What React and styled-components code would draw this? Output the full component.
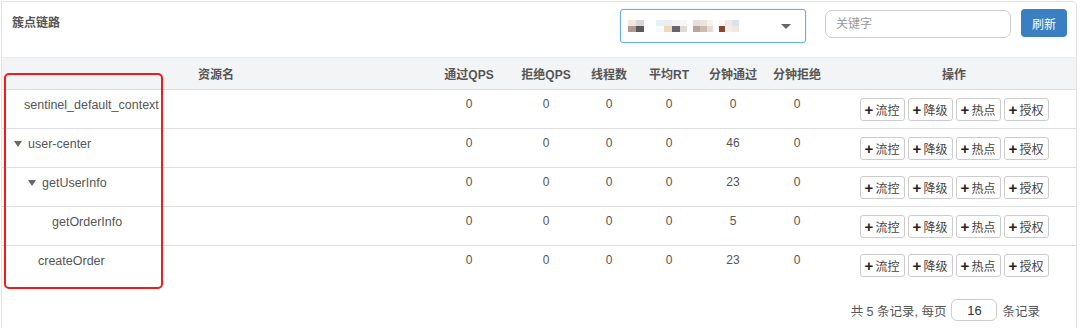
import React from "react"
import styled, { createGlobalStyle } from "styled-components"

const GlobalStyle = createGlobalStyle`
  body {
    margin: 0;
    background: #fff;
    font-family: "Liberation Sans", "Noto Sans CJK SC", sans-serif;
    font-size: 12px;
    color: #555;
  }
`

const Page = styled.div`
  position: relative;
  width: 1080px;
  height: 328px;
  overflow: hidden;
  padding: 1px 0 0 1px;
  box-sizing: border-box;
`

const Panel = styled.div`
  width: 1076px;
  height: 340px;
  border: 1px solid #e3e3e3;
  border-radius: 0 5px 0 0;
  box-sizing: border-box;
`

const Toolbar = styled.div`
  height: 55px;
  display: flex;
  align-items: flex-start;
  padding: 0 9px 0 10px;
`

const Title = styled.div`
  font-weight: bold;
  color: #555;
  margin-top: 11px;
  flex: 1;
`

const Select = styled.div`
  width: 186px;
  height: 34px;
  margin-top: 7px;
  border: 1px solid #66afe9;
  border-radius: 3px;
  box-sizing: border-box;
  display: flex;
  align-items: center;
  padding: 0 14px 0 7px;
  box-shadow: 0 0 2px rgba(102, 175, 233, 0.4);
`

const Blurred = styled.div`
  display: flex;
  align-items: center;
  flex: 1;
  filter: blur(0.5px);
`

const Pix = styled.span`
  display: inline-block;
  width: ${p => p.w || 6}px;
  height: 12px;
  margin-right: ${p => p.gap || 0}px;
  background: linear-gradient(${p => p.top} 50%, ${p => p.bottom} 50%);
`

const Caret = styled.span`
  width: 0;
  height: 0;
  border-left: 5px solid transparent;
  border-right: 5px solid transparent;
  border-top: 5px solid #666;
`

const Search = styled.input`
  width: 186px;
  height: 28px;
  margin: 8px 0 0 19px;
  border: 1px solid #ccc;
  border-radius: 7px;
  box-sizing: border-box;
  padding: 0 10px;
  font-family: inherit;
  font-size: 12px;
  color: #555;
  outline: none;
  &::placeholder {
    color: #999;
  }
`

const RefreshButton = styled.button`
  width: 46px;
  height: 28px;
  margin: 7px 0 0 10px;
  border: none;
  border-radius: 4px;
  background: #3a7fc1;
  color: #fff;
  font-family: inherit;
  font-size: 12px;
  cursor: pointer;
`

const cols = "428px 78px 76px 50px 70px 58px 70px 1fr"

const HeadRow = styled.div`
  display: grid;
  grid-template-columns: ${cols};
  height: 33px;
  align-items: center;
  background: #f3f4f6;
  border-top: 1px solid #ececec;
  border-bottom: 1px solid #dcdcdc;
  box-sizing: border-box;
  font-weight: bold;
  color: #555;
`

const Cell = styled.div`
  text-align: center;
  white-space: nowrap;
`

const Row = styled.div`
  display: grid;
  grid-template-columns: ${cols};
  height: 39px;
  align-items: start;
  border-bottom: ${p => (p.last ? "none" : "1px solid #dedede")};
  box-sizing: border-box;
  color: #555;
`

const DataCell = styled(Cell)`
  padding-top: 7px;
`

const NameCell = styled.div`
  display: flex;
  align-items: center;
  padding: 8px 0 0 ${p => p.indent}px;
  font-size: 12.5px;
  color: #555;
`

const Toggle = styled.span`
  width: 0;
  height: 0;
  border-left: 4px solid transparent;
  border-right: 4px solid transparent;
  border-top: 6px solid #666;
  margin-right: 6px;
`

const Actions = styled.div`
  display: flex;
  justify-content: center;
  gap: 3px;
  padding-top: 8px;
`

const ActionButton = styled.button`
  width: 45px;
  height: 23px;
  padding: 0;
  border: 1px solid #ccc;
  border-radius: 3px;
  background: #fff;
  color: #444;
  font-family: inherit;
  font-size: 12px;
  display: flex;
  align-items: center;
  justify-content: center;
  gap: 2px;
  cursor: pointer;
`

const Plus = styled.b`
  font-size: 15px;
  font-weight: 900;
  line-height: 1;
  color: #222;
`

const Pager = styled.div`
  display: flex;
  justify-content: flex-end;
  align-items: center;
  gap: 5px;
  padding: 14px 36px 0 0;
  font-size: 12.5px;
  color: #555;
`

const PageSize = styled.input`
  width: 46px;
  height: 22px;
  border: 1px solid #ccc;
  border-radius: 6px;
  box-sizing: border-box;
  text-align: center;
  font-family: inherit;
  font-size: 13px;
  color: #333;
`

const Highlight = styled.div`
  position: absolute;
  left: 4px;
  top: 73px;
  width: 159px;
  height: 216px;
  border: 2px solid #f01c1c;
  border-radius: 5px;
  box-sizing: border-box;
  pointer-events: none;
`

const rows = [
  { name: "sentinel_default_context", indent: 22, stats: [0, 0, 0, 0, 0, 0] },
  { name: "user-center", indent: 12, toggle: true, stats: [0, 0, 0, 0, 46, 0] },
  { name: "getUserInfo", indent: 26, toggle: true, stats: [0, 0, 0, 0, 23, 0] },
  { name: "getOrderInfo", indent: 50, stats: [0, 0, 0, 0, 5, 0] },
  { name: "createOrder", indent: 36, stats: [0, 0, 0, 0, 23, 0] },
]

const headers = ["资源名", "通过QPS", "拒绝QPS", "线程数", "平均RT", "分钟通过", "分钟拒绝", "操作"]
const actions = ["流控", "降级", "热点", "授权"]

const pixels = [
  { w: 8, top: "#f1e6e0", bottom: "#b09a90" },
  { w: 8, top: "#dcd6d4", bottom: "#5f5757", gap: 12 },
  { w: 8, top: "#e8f0f4", bottom: "#f4fafd" },
  { w: 8, top: "#e6eef3", bottom: "#f0d9bb" },
  { w: 8, top: "#f3f3f3", bottom: "#67636e" },
  { w: 7, top: "#f8f8f8", bottom: "#dedcd2", gap: 6 },
  { w: 7, top: "#e7dfda", bottom: "#b4a69a" },
  { w: 7, top: "#ece5df", bottom: "#cdbbae" },
  { w: 6, top: "#f6f4f2", bottom: "#e5dcd4", gap: 6 },
  { w: 6, top: "#f8f6f6", bottom: "#87482a" },
  { w: 7, top: "#ece9ea", bottom: "#f4eee8" },
  { w: 7, top: "#dbe2e8", bottom: "#f1e7dc" },
]

export default function App() {
  return (
    <Page>
      <GlobalStyle />
      <Panel>
        <Toolbar>
          <Title>簇点链路</Title>
          <Select>
            <Blurred>
              {pixels.map((p, i) => (
                <Pix key={i} {...p} />
              ))}
            </Blurred>
            <Caret />
          </Select>
          <Search placeholder="关键字" />
          <RefreshButton>刷新</RefreshButton>
        </Toolbar>
        <HeadRow>
          {headers.map(h => (
            <Cell key={h}>{h}</Cell>
          ))}
        </HeadRow>
        {rows.map((r, i) => (
          <Row key={r.name} last={i === rows.length - 1}>
            <NameCell indent={r.indent}>
              {r.toggle && <Toggle />}
              {r.name}
            </NameCell>
            {r.stats.map((s, j) => (
              <DataCell key={j}>{s}</DataCell>
            ))}
            <Actions>
              {actions.map(a => (
                <ActionButton key={a}>
                  <Plus>+</Plus>
                  {a}
                </ActionButton>
              ))}
            </Actions>
          </Row>
        ))}
        <Pager>
          <span>共 5 条记录, 每页</span>
          <PageSize defaultValue="16" />
          <span>条记录</span>
        </Pager>
      </Panel>
      <Highlight />
    </Page>
  )
}
